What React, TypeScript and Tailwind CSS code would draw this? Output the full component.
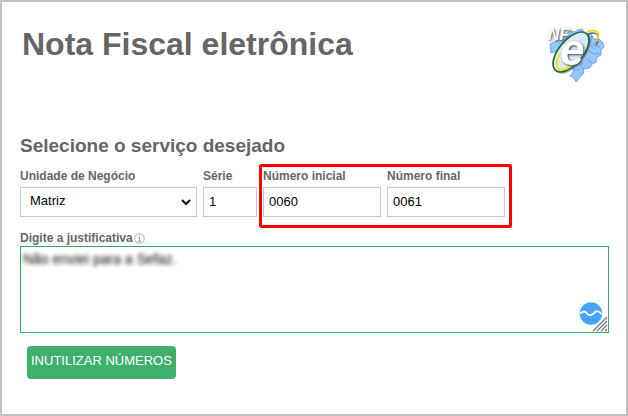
import React from "react";

const fieldClass =
  "h-[30px] w-full border border-[#c8c8c8] bg-white pb-[2px] text-[13px] text-black outline-none";

const App = () => {
  return (
    <main className="min-h-screen border-2 border-[#c3c3c3] bg-white pt-6 pr-[17px] pb-8 pl-[18px] font-['Liberation_Sans',Arial,sans-serif] text-[#666]">
      <header className="flex items-start justify-between pl-[2px]">
        <h1 className="text-[32px] leading-[36px] font-bold">Nota Fiscal eletrônica</h1>
        <NfeLogo />
      </header>

      <form className="mt-12" onSubmit={(e) => e.preventDefault()}>
        <h2 className="text-[19px] leading-6 font-bold">Selecione o serviço desejado</h2>

        <div className="mt-[10px] flex flex-wrap gap-[6px]">
          <Field id="unidade" label="Unidade de Negócio" className="w-[177px]">
            <div className="relative">
              <select id="unidade" className={`${fieldClass} appearance-none pl-[9px]`}>
                <option>Matriz</option>
              </select>
              <svg
                className="pointer-events-none absolute top-3 right-[6px] h-[7px] w-[10px]"
                viewBox="0 0 10 7"
                fill="none"
                stroke="#111"
                strokeWidth="2"
              >
                <path d="M1 1l4 4 4-4" />
              </svg>
            </div>
          </Field>
          <Field id="serie" label="Série" className="w-[54px]">
            <input id="serie" defaultValue="1" className={`${fieldClass} px-[5px]`} />
          </Field>

          {/* Number range */}
          <div className="relative flex gap-[6px]">
            <Field id="inicial" label="Número inicial" className="w-[118px]">
              <input id="inicial" defaultValue="0060" className={`${fieldClass} px-[5px]`} />
            </Field>
            <Field id="final" label="Número final" className="w-[118px]">
              <input id="final" defaultValue="0061" className={`${fieldClass} px-[5px]`} />
            </Field>
            <span className="pointer-events-none absolute -top-1 -right-[7px] -bottom-[11px] -left-1 rounded-[2px] border-3 border-[#fe0000]" />
          </div>
        </div>

        <div className="mt-[13px] flex items-center gap-[1px]">
          <label htmlFor="justificativa" className="text-[12px] leading-4 font-bold">
            Digite a justificativa
          </label>
          <svg className="h-[11px] w-[11px]" viewBox="0 0 11 11" fill="none" stroke="#999">
            <circle cx="5.5" cy="5.5" r="4.8" strokeWidth="0.8" />
            <path d="M4.3 4.7h1.2v3.4M4 8.2h3M5 2.8h1.2" />
          </svg>
        </div>
        <div className="relative h-[87px] border border-[#3aa660]">
          <textarea
            id="justificativa"
            defaultValue="Não enviei para a Sefaz."
            className="block h-full w-full resize-none px-[2px] pt-1 text-[14px] leading-4 text-black blur-[2px] outline-none"
          />
          <svg
            className="pointer-events-none absolute right-0 bottom-0 h-[30px] w-[30px]"
            viewBox="0 0 30 30"
            fill="none"
          >
            <circle cx="13" cy="11.5" r="11.2" fill="#42a5f9" />
            <path
              d="M3 11c2-2 4-2 6 .5s5 2 7-.5 5-2 7 .5"
              stroke="#fff"
              strokeWidth="2"
              strokeLinecap="round"
            />
            <path d="M15 29L29 15M19 29l10-10M23 29l6-6M27 29l2-2" stroke="#fff" strokeWidth="2.5" />
            <path d="M15 29L29 15M19 29l10-10M23 29l6-6M27 29l2-2" stroke="#777" strokeWidth="1.3" />
          </svg>
        </div>

        <button
          type="submit"
          className="mt-[13px] ml-[7px] h-[33px] rounded bg-[#3fb06b] px-1 pb-1 text-[13px] text-white"
        >
          INUTILIZAR NÚMEROS
        </button>
      </form>
    </main>
  );
};

const Field = ({
  id,
  label,
  className,
  children,
}: {
  id: string;
  label: string;
  className: string;
  children: React.ReactNode;
}) => (
  <div className={className}>
    <label htmlFor={id} className="mb-[3px] block text-[12px] leading-4 font-bold">
      {label}
    </label>
    {children}
  </div>
);

const NfeLogo = () => (
  <svg
    className="h-[60px] w-[62px] overflow-visible"
    viewBox="0 0 62 60"
    fill="none"
    role="img"
    aria-label="NF-e"
  >
    {/* Map of Brazil */}
    <path
      d="M3 18l4-2 11-3 3-7 4-1 3 1 3-2 4-1 3 4 7 2 1 4 6 0 4 4 1 4-3 3 0 5-4 2-1 5-4 2-2 4-7 1 1 4-3 3-5 6-2-4-4-2 4-5-2-4-7-5-2-8-6-3-6 2z"
      fill="#98c5f9"
      stroke="#5b95e8"
      strokeWidth="0.8"
    />
    <path
      d="M45 10l-2 9 4 4M51 14l-5 5 7 2M42 25l5 3 5-1M40 33l5 4M36 36l-3 4 3 3M27 44l6 0M24 6l4 5"
      stroke="#5d96e6"
      strokeWidth="0.8"
    />
    {/* Rings */}
    <path d="M41 8c5-2 9-1 10 2 1 3 0 6-2 9" stroke="#666" strokeWidth="1.5" />
    <path d="M40 6c5-2 10-2 11 1 1 3 0 6-1 8" stroke="#f2d61c" strokeWidth="1.8" />
    <ellipse
      cx="25"
      cy="27"
      rx="12"
      ry="24"
      transform="rotate(40 25 27)"
      stroke="#666"
      strokeWidth="1.5"
      opacity="0.6"
    />
    <ellipse cx="24" cy="26" rx="12" ry="24" transform="rotate(40 24 26)" fill="#dce9fb" />
    <path d="M13 28c-5 8-4 15 0 16 3 0 7-2 10-5" stroke="#f4e425" strokeWidth="2.2" />
    <ellipse
      cx="24"
      cy="26"
      rx="12"
      ry="24"
      transform="rotate(40 24 26)"
      stroke="#127038"
      strokeWidth="1.7"
    />
    <text
      x="13"
      y="39"
      className="font-['Liberation_Sans',Arial,sans-serif] text-[44px] font-bold italic drop-shadow-[1px_1px_1px_#444]"
      fill="#fff"
    >
      e
    </text>
    <text
      x="1"
      y="14"
      className="font-['Liberation_Sans',Arial,sans-serif] text-[16px] font-bold italic drop-shadow-[1px_1px_1px_#444]"
      fill="#fff"
    >
      NF
    </text>
  </svg>
);

export default App;
